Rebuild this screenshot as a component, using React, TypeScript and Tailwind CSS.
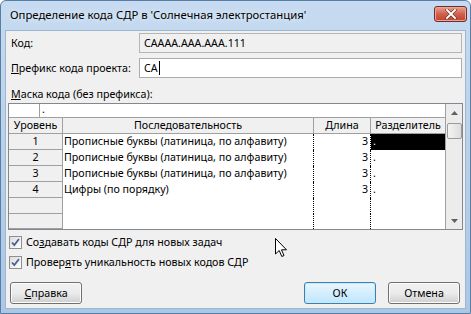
import React from "react";

const font = { fontFamily: '"Noto Sans", "Open Sans", sans-serif' };

function Checkbox() {
  return (
    <div className="w-[13px] h-[13px] border border-[#8e8f8f] bg-gradient-to-br from-[#dcdcdc] to-[#ffffff] flex items-center justify-center">
      <svg width="11" height="11" viewBox="0 0 11 11">
        <path d="M2 5.5 L4.3 8 L9 2" fill="none" stroke="#4a5f97" strokeWidth="1.8" />
      </svg>
    </div>
  );
}

const rows = [
  { n: "1", seq: "Прописные буквы (латиница, по алфавиту)", len: "3", sep: ".", sel: true },
  { n: "2", seq: "Прописные буквы (латиница, по алфавиту)", len: "3", sep: "." },
  { n: "3", seq: "Прописные буквы (латиница, по алфавиту)", len: "3", sep: "." },
  { n: "4", seq: "Цифры (по порядку)", len: "3", sep: "." },
  { n: "", seq: "", len: "", sep: "" },
  { n: "", seq: "", len: "", sep: "" },
];

function Btn({ children, def }: { children: React.ReactNode; def?: boolean }) {
  return (
    <div
      className={
        "h-[22px] w-[72px] rounded-[3px] border flex items-center justify-center text-black whitespace-nowrap " +
        (def
          ? "border-[#3c7fb1] bg-gradient-to-b from-[#eaf6fd] to-[#bee6fd] shadow-[inset_0_0_0_1px_#c8eaff]"
          : "border-[#707070] bg-gradient-to-b from-[#f2f2f2] via-[#ebebeb] to-[#cfcfcf] shadow-[inset_0_0_0_1px_#fcfcfc]")
      }
    >
      {children}
    </div>
  );
}

export default function App() {
  return (
    <div
      className="w-[471px] h-[314px] relative overflow-hidden flex flex-col rounded-t-[6px] border border-[#5a7da3] bg-gradient-to-b from-[#c6dbf1] via-[#b8d0ea] to-[#aac7e6] text-[10.7px] whitespace-nowrap"
      style={font}
    >
      {/* Title bar */}
      <div className="h-[29px] flex items-start justify-between pl-[9px] pr-[3px] shrink-0">
        <div className="text-[11.3px] leading-[16px] text-black mt-[6px] [text-shadow:0_0_6px_#ffffff]">
          Определение кода СДР в 'Солнечная электростанция'
        </div>
        <div className="mt-[5px] w-[33px] h-[16px] rounded-[3px] border border-[#6e2d2a] bg-gradient-to-b from-[#e8a18f] via-[#d0604c] to-[#c2412f] flex items-center justify-center shadow-[inset_0_0_0_1px_#eaa893]">
          <svg width="12" height="10" viewBox="0 0 12 10">
            <path d="M2 1 L10 9 M10 1 L2 9" stroke="#3a1a18" strokeWidth="3" strokeLinecap="square" />
            <path d="M2 1 L10 9 M10 1 L2 9" stroke="#ffffff" strokeWidth="2" strokeLinecap="square" />
          </svg>
        </div>
      </div>

      {/* Content */}
      <div className="flex-1 mx-[4px] mb-[4px] bg-[#f0f0f0] border border-[#9fb6cf] flex flex-col text-black relative">
        {/* Код */}
        <div className="mt-[2px] h-[20px] flex items-center">
          <div className="w-[133px] pl-[5px]">Код:</div>
          <div className="w-[323px] h-[20px] border border-[#b5b5b5] bg-[#f0f0f0] pl-[4px] flex items-center">
            CAAAA.AAA.AAA.111
          </div>
        </div>
        {/* Префикс */}
        <div className="mt-[5px] h-[20px] flex items-center">
          <div className="w-[133px] pl-[5px]">
            <span className="underline">П</span>рефикс кода проекта:
          </div>
          <div className="w-[323px] h-[20px] border border-[#abadb3] bg-white pl-[4px] flex items-center">
            CA<span className="inline-block w-[1px] h-[14px] bg-black ml-[1px]" />
          </div>
        </div>
        {/* Маска */}
        <div className="mt-[8px] h-[16px] leading-[16px] pl-[5px]">
          <span className="underline">М</span>аска кода (без префикса):
        </div>

        {/* Grid */}
        <div className="mt-[1px] ml-[2px] w-[455px] h-[127px] border border-[#828790] bg-white flex">
          <div className="w-[436px] flex flex-col">
            {/* edit row */}
            <div className="h-[14px] flex">
              <div className="w-[31px] border-r border-[#a0a0a0]" />
              <div className="pl-[2px] leading-[11px]">.</div>
            </div>
            {/* header */}
            <div className="h-[17px] flex bg-[#f0f0f0] border-t border-b border-[#a0a0a0] leading-[15px]">
              <div className="w-[54px] border-r border-[#a0a0a0] text-center">Уровень</div>
              <div className="w-[251px] border-r border-[#a0a0a0] text-center">Последовательность</div>
              <div className="w-[57px] border-r border-[#a0a0a0] text-center">Длина</div>
              <div className="w-[74px] text-center">Разделитель</div>
            </div>
            {/* rows */}
            {rows.map((r, i) => (
              <div key={i} className="h-[16px] flex leading-[15px]">
                <div className="w-[54px] bg-[#f0f0f0] border-r border-b border-[#a0a0a0] text-center">{r.n}</div>
                <div className="w-[251px] pl-[1px] border-r border-dotted border-black overflow-hidden">{r.seq}</div>
                <div className="w-[57px] pr-[2px] text-right border-r border-dotted border-black">{r.len}</div>
                <div className={"w-[74px] pl-[2px] " + (r.sel ? "bg-black text-white" : "")}>{r.sep}</div>
              </div>
            ))}
          </div>
          {/* scrollbar */}
          <div className="w-[17px] border-l border-[#a0a0a0] bg-[#ececec] flex flex-col items-center">
            <div className="h-[17px] w-full flex items-center justify-center">
              <svg width="7" height="4" viewBox="0 0 7 4">
                <path d="M0 4 L3.5 0 L7 4 Z" fill="#606060" />
              </svg>
            </div>
            <div className="mt-[2px] w-[15px] h-[16px] rounded-[2px] border border-[#9a9a9a] bg-gradient-to-r from-[#f4f4f4] to-[#dcdcdc]" />
            <div className="flex-1" />
            <div className="h-[17px] w-full flex items-center justify-center">
              <svg width="7" height="4" viewBox="0 0 7 4">
                <path d="M0 0 L7 0 L3.5 4 Z" fill="#606060" />
              </svg>
            </div>
          </div>
        </div>

        {/* Checkboxes */}
        <div className="mt-[4px] h-[16px] flex items-center pl-[3px] gap-[4px]">
          <Checkbox />
          <span>
            Со<span className="underline">з</span>давать коды СДР для новых задач
          </span>
        </div>
        <div className="mt-[4px] h-[16px] flex items-center pl-[3px] gap-[4px]">
          <Checkbox />
          <span>
            Провер<span className="underline">я</span>ть уникальность новых кодов СДР
          </span>
        </div>

        {/* Buttons */}
        <div className="mt-[12px] flex items-center pl-[4px] pr-[5px]">
          <Btn>
            <span className="underline">С</span>правка
          </Btn>
          <div className="flex-1" />
          <Btn def>ОК</Btn>
          <div className="w-[12px]" />
          <Btn>Отмена</Btn>
        </div>

        {/* mouse cursor */}
        <svg className="absolute left-[269px] top-[207px]" width="13" height="20" viewBox="0 0 13 20">
          <path d="M0.5 0.5 L0.5 16 L4.2 12.5 L6.8 18.5 L9 17.5 L6.5 11.8 L11.5 11.8 Z" fill="#ffffff" stroke="#000000" strokeWidth="1" strokeLinejoin="miter" />
        </svg>
      </div>
    </div>
  );
}
